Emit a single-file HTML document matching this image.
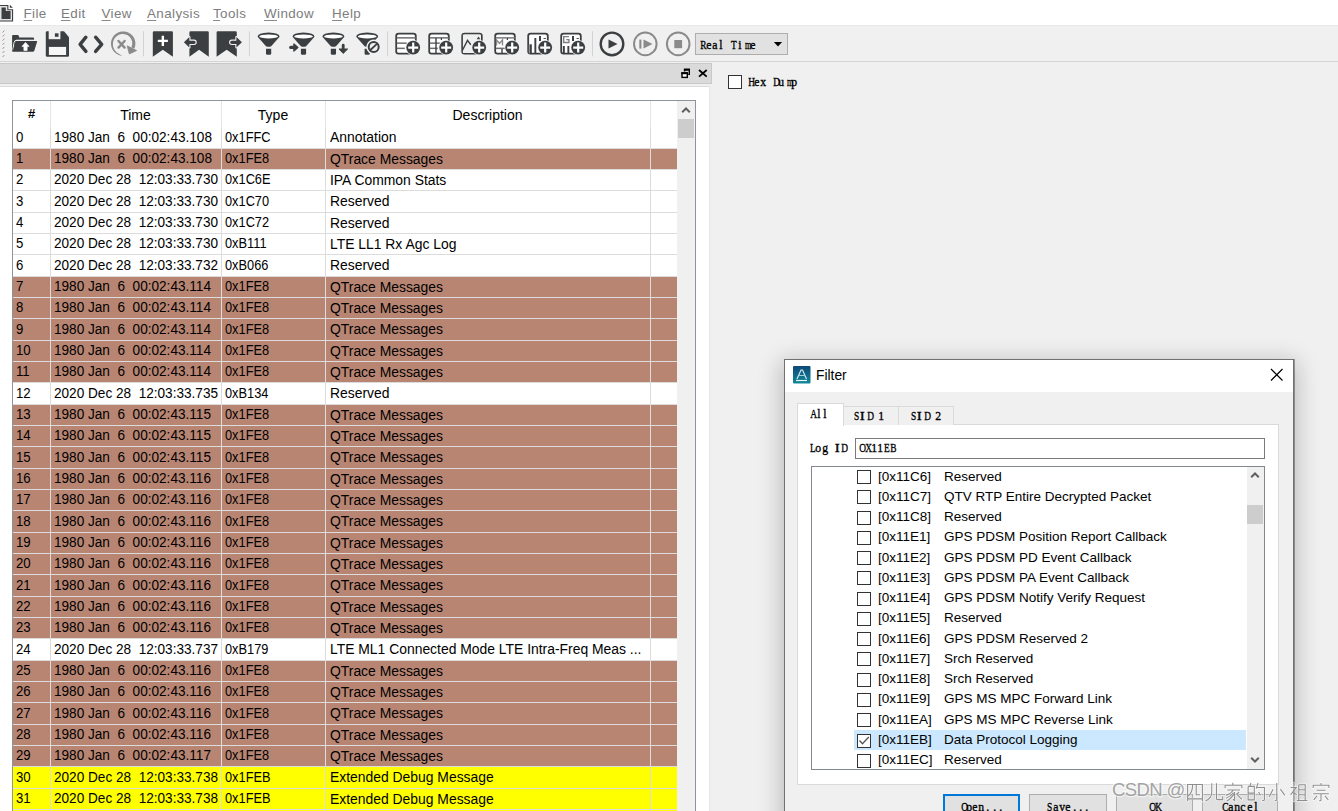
<!DOCTYPE html>
<html><head><meta charset="utf-8"><style>
*{margin:0;padding:0;box-sizing:border-box}
html,body{width:1338px;height:811px;overflow:hidden;background:#f0f0f0;font-family:"Liberation Sans",sans-serif;}
.a{position:absolute}
.t{position:absolute;white-space:pre;font-size:13px;color:#000;line-height:21px}
.m{font-family:"Liberation Mono",monospace;-webkit-text-stroke:0.2px #000}
.ms{font-family:"Liberation Serif",serif;-webkit-text-stroke:0.35px #000}
</style></head><body>

<div class="a" style="left:0;top:0;width:1338px;height:26px;background:#fff"></div>
<div class="a" style="left:0;top:25px;width:1338px;height:1px;background:#e9e9e9"></div>
<svg class="a" style="left:0;top:0" width="15" height="24" viewBox="0 0 15 24"><path d="M-1 5.1H8.4V9.3H13.1V21.6H-1Z" fill="#3c3f41"/><path d="M-1 6.1H7.3V10.3H12V20.5H-1Z" fill="#e2e2e2"/><path d="M1.5 7.6H5.8V11H10.6V18.9H1.5Z" fill="#3c3f41"/><path d="M9.8 4.7L12.9 7.8H9.8Z" fill="#3c3f41"/></svg>
<div class="t" style="left:23.5px;top:5px;font-size:13.4px;letter-spacing:0.4px;color:#7d7d7d;line-height:18px"><u style="text-decoration-color:#8a8a8a;text-underline-offset:2px">F</u>ile</div>
<div class="t" style="left:61px;top:5px;font-size:13.4px;letter-spacing:0.4px;color:#7d7d7d;line-height:18px"><u style="text-decoration-color:#8a8a8a;text-underline-offset:2px">E</u>dit</div>
<div class="t" style="left:101.5px;top:5px;font-size:13.4px;letter-spacing:0.4px;color:#7d7d7d;line-height:18px"><u style="text-decoration-color:#8a8a8a;text-underline-offset:2px">V</u>iew</div>
<div class="t" style="left:147px;top:5px;font-size:13.4px;letter-spacing:0.4px;color:#7d7d7d;line-height:18px"><u style="text-decoration-color:#8a8a8a;text-underline-offset:2px">A</u>nalysis</div>
<div class="t" style="left:213px;top:5px;font-size:13.4px;letter-spacing:0.4px;color:#7d7d7d;line-height:18px"><u style="text-decoration-color:#8a8a8a;text-underline-offset:2px">T</u>ools</div>
<div class="t" style="left:264px;top:5px;font-size:13.4px;letter-spacing:0.4px;color:#7d7d7d;line-height:18px"><u style="text-decoration-color:#8a8a8a;text-underline-offset:2px">W</u>indow</div>
<div class="t" style="left:332px;top:5px;font-size:13.4px;letter-spacing:0.4px;color:#7d7d7d;line-height:18px"><u style="text-decoration-color:#8a8a8a;text-underline-offset:2px">H</u>elp</div>
<div class="a" style="left:0;top:27px;width:1338px;height:34px;background:#f0f0f0"></div>
<div class="a" style="left:0;top:61px;width:1338px;height:1px;background:#d5d5d5"></div>
<svg class="a" style="left:0;top:0" width="800" height="62" viewBox="0 0 800 62"><path d="M2.6 32.5 L4.4 30.5" stroke="#9a9a9a" stroke-width="1"/><path d="M2.6 36.6 L4.4 34.6" stroke="#9a9a9a" stroke-width="1"/><path d="M2.6 40.7 L4.4 38.7" stroke="#9a9a9a" stroke-width="1"/><path d="M2.6 44.8 L4.4 42.8" stroke="#9a9a9a" stroke-width="1"/><path d="M2.6 48.9 L4.4 46.9" stroke="#9a9a9a" stroke-width="1"/><path d="M2.6 53 L4.4 51" stroke="#9a9a9a" stroke-width="1"/><path d="M2.6 57.1 L4.4 55.1" stroke="#9a9a9a" stroke-width="1"/><path d="M12.1 50.5 V36 Q12.1 35.1 13 35.1 H18.3 L19.3 37.4 H33 Q34.1 37.4 34.1 38.5 V40 H16 L13.2 51.7 Q12.1 51.7 12.1 50.5 Z" fill="#3c3f41"/><path d="M36.5 40.2 H16.6 Q14.5 40.2 14 42.5 L12.9 49.8" fill="none" stroke="#f0f0f0" stroke-width="1"/><path d="M16.2 40.9 H36.5 Q37.4 40.9 37.1 41.8 L34.2 50.9 Q33.9 51.7 33 51.7 H13.4 Q12.6 51.7 12.9 50.9 L15.3 42 Q15.5 40.9 16.2 40.9 Z" fill="#3c3f41"/><path d="M25.5 42.4 L29 46.4 H27.1 V50.4 H23.9 V46.4 H22 Z" fill="#fff" stroke="#fff" stroke-width="0.7" stroke-linejoin="round"/><path d="M45.8 32.5 Q45.8 31.35 47 31.35 H64 L69 37.3 V55.5 Q69 56.7 67.8 56.7 H47 Q45.8 56.7 45.8 55.5 Z" fill="#3c3f41"/><rect x="48.7" y="31" width="11.7" height="8.2" fill="#f0f0f0"/><rect x="54.9" y="33.3" width="3.6" height="3.5" fill="#3c3f41"/><rect x="48.9" y="46.9" width="17.2" height="8.1" fill="#f6f6f6"/><path d="M85.9 37.2 L80.1 44.3 L85.9 51.4 M95.6 37.2 L101.7 44.3 L95.6 51.4" fill="none" stroke="#3c3f41" stroke-width="3.4" stroke-linecap="round" stroke-linejoin="round"/><path d="M121.71 55.71 L120.21 55.43 L118.75 54.96 L117.36 54.31 L116.06 53.49 L114.88 52.52 L113.83 51.41 L112.92 50.17 L112.18 48.83 L111.61 47.41 L111.22 45.93 L111.03 44.41 L111.02 42.88 L111.21 41.36 L111.58 39.87 L112.14 38.44 L112.88 37.1 L113.77 35.86 L114.82 34.74 L115.99 33.76 L117.29 32.93 L118.67 32.27 L120.12 31.79 L121.63 31.5 L123.16 31.4 L124.69 31.49 L126.19 31.77 L127.65 32.24 L129.04 32.89 L130.34 33.71 L131.52 34.68 L132.57 35.79 L133.48 37.03 L134.22 38.37 L134.79 39.79 L135.18 41.27 L135.37 42.79 L135.38 44.32 L135.19 45.84 L134.82 47.33 L134.26 48.76 L131.27 47.36 L131.71 46.33 L132.02 45.25 L132.2 44.13 L132.23 43 L132.13 41.86 L131.88 40.75 L131.49 39.66 L130.96 38.63 L130.31 37.67 L129.54 36.8 L128.67 36.02 L127.69 35.36 L126.64 34.82 L125.53 34.41 L124.36 34.14 L123.17 34.02 L121.96 34.06 L120.76 34.24 L119.59 34.57 L118.46 35.05 L117.39 35.67 L116.41 36.42 L115.52 37.29 L114.74 38.27 L114.08 39.35 L113.56 40.5 L113.18 41.73 L112.96 42.99 L112.9 44.28 L112.99 45.58 L113.25 46.87 L113.66 48.13 L114.23 49.34 L114.95 50.47 L115.81 51.53 L116.79 52.48 L117.9 53.33 L119.1 54.05 L120.4 54.68 L121.75 55.41Z" fill="#8a8a8a"/><path d="M127.2 45.8 L136.6 50.6 L129.3 53.9 Z" fill="#8a8a8a" stroke="#8a8a8a" stroke-width="0.8" stroke-linejoin="round"/><path d="M118.5 41 L124.6 47.6 M124.6 41 L118.5 47.6" stroke="#8a8a8a" stroke-width="2.4" stroke-linecap="round"/><rect x="143.0" y="31.3" width="1" height="25" fill="#d2d2d2"/><rect x="248.9" y="31.3" width="1" height="25" fill="#d2d2d2"/><rect x="387.1" y="31.3" width="1" height="25" fill="#d2d2d2"/><rect x="592.0" y="31.3" width="1" height="25" fill="#d2d2d2"/><path d="M152.8 56.7 V32.5 Q152.8 31.35 154 31.35 H171.7 Q172.9 31.35 172.9 32.5 V56.7 L162.85 49.8 Z" fill="#3c3f41"/><path d="M157.8 40.9 H167.9 M162.85 35.7 V45.9" stroke="#fff" stroke-width="2.4"/><path d="M189.4 56.7 V32.5 Q189.4 31.35 190.6 31.35 H207.6 Q208.8 31.35 208.8 32.5 V56.7 L199.1 49.8 Z" fill="#3c3f41"/><path d="M183.9 42.35 L189.4 37.1 V40.7 H194 A1.65 1.65 0 0 1 194 44 H189.4 V47.4 Z" fill="#3c3f41" stroke="#f0f0f0" stroke-width="2.2" stroke-linejoin="round" paint-order="stroke"/><path d="M216.6 56.7 V32.5 Q216.6 31.35 217.8 31.35 H235.6 Q236.8 31.35 236.8 32.5 V56.7 L226.7 49.8 Z" fill="#3c3f41"/><path d="M241.9 42.35 L236.4 37.1 V40.7 H231.8 A1.65 1.65 0 0 0 231.8 44 H236.4 V47.4 Z" fill="#3c3f41" stroke="#f0f0f0" stroke-width="2.2" stroke-linejoin="round" paint-order="stroke"/><path d="M257.6 36.8 Q257.6 33 268.6 32.6 Q279.6 33 279.6 36.8 L271.2 46.2 Q268.6 47.2 266 46.2 Z" fill="#3c3f41"/><ellipse cx="268.6" cy="36.4" rx="9.4" ry="2" fill="#fff"/><path d="M266 48.8 H271.2 V53.4 Q271.2 54.7 269.9 54.7 H267.3 Q266 54.7 266 53.4 Z" fill="#3c3f41"/><path d="M292.5 36.8 Q292.5 33 303.5 32.6 Q314.5 33 314.5 36.8 L306.1 46.2 Q303.5 47.2 300.9 46.2 Z" fill="#3c3f41"/><ellipse cx="303.5" cy="36.4" rx="9.4" ry="2" fill="#fff"/><path d="M300.9 48.8 H306.1 V53.4 Q306.1 54.7 304.8 54.7 H302.2 Q300.9 54.7 300.9 53.4 Z" fill="#3c3f41"/><path d="M290.8 47.4 H294.5" stroke="#3c3f41" stroke-width="3.3" stroke-linecap="round"/><path d="M293.9 43.9 L297.9 47.4 L293.9 51.1 Z" fill="#3c3f41" stroke="#3c3f41" stroke-width="1.3" stroke-linejoin="round"/><path d="M322.4 36.8 Q322.4 33 333.4 32.6 Q344.4 33 344.4 36.8 L336 46.2 Q333.4 47.2 330.8 46.2 Z" fill="#3c3f41"/><ellipse cx="333.4" cy="36.4" rx="9.4" ry="2" fill="#fff"/><path d="M330.8 48.8 H336 V53.4 Q336 54.7 334.7 54.7 H332.1 Q330.8 54.7 330.8 53.4 Z" fill="#3c3f41"/><path d="M343.2 45.2 V49.2" stroke="#3c3f41" stroke-width="2.8" stroke-linecap="round"/><path d="M339 49 H347.6 L343.2 53.4 Z" fill="#3c3f41" stroke="#3c3f41" stroke-width="1" stroke-linejoin="round"/><path d="M356.2 36.8 Q356.2 33 367.2 32.6 Q378.2 33 378.2 36.8 L369.8 46.2 Q367.2 47.2 364.6 46.2 Z" fill="#3c3f41"/><ellipse cx="367.2" cy="36.4" rx="9.4" ry="2" fill="#fff"/><path d="M364.6 48.8 H369.8 V53.4 Q369.8 54.7 368.5 54.7 H365.9 Q364.6 54.7 364.6 53.4 Z" fill="#3c3f41"/><circle cx="373.7" cy="46.9" r="7.4" fill="#f0f0f0"/><circle cx="373.7" cy="46.9" r="5" fill="none" stroke="#3c3f41" stroke-width="2"/><path d="M369.8 50.5 L377.5 43.3" stroke="#3c3f41" stroke-width="1.8"/><rect x="396.2" y="33.7" width="19.6" height="20" rx="2.4" fill="#fff" stroke="#3c3f41" stroke-width="1.8"/><rect x="396.8" y="37.1" width="19" height="1.5" fill="#6e6e6e"/><rect x="396.8" y="42.4" width="10" height="1.5" fill="#6e6e6e"/><rect x="396.8" y="47.6" width="8" height="1.5" fill="#6e6e6e"/><circle cx="413.2" cy="47.6" r="7.7" fill="#f0f0f0"/><circle cx="413.2" cy="47.6" r="6.9" fill="#3c3f41"/><path d="M408.2 47.6H418.2M413.2 42.6V52.6" stroke="#fff" stroke-width="2.2"/><rect x="429.2" y="33.7" width="19.6" height="20" rx="2.4" fill="#fff" stroke="#3c3f41" stroke-width="1.8"/><rect x="429.8" y="37.1" width="19" height="1.5" fill="#6e6e6e"/><rect x="429.8" y="42.4" width="10" height="1.5" fill="#6e6e6e"/><rect x="429.8" y="47.6" width="8" height="1.5" fill="#6e6e6e"/><rect x="435.3" y="38" width="1.4" height="16" fill="#3c3f41"/><rect x="440.8" y="38" width="1.2" height="2" fill="#3c3f41"/><circle cx="446.2" cy="47.6" r="7.7" fill="#f0f0f0"/><circle cx="446.2" cy="47.6" r="6.9" fill="#3c3f41"/><path d="M441.2 47.6H451.2M446.2 42.6V52.6" stroke="#fff" stroke-width="2.2"/><rect x="462.2" y="33.7" width="19.6" height="20" rx="2.4" fill="#fff" stroke="#3c3f41" stroke-width="1.8"/><rect x="462.9" y="34.6" width="18" height="18.4" fill="#f0f0f0"/><path d="M462.6 50 L467.5 40.4 L470.8 44.7" fill="none" stroke="#3c3f41" stroke-width="1.4"/><path d="M476.7 39.3 L478.5 36.6 L480.3 39.3Z" fill="#3c3f41"/><circle cx="479.2" cy="47.6" r="7.7" fill="#f0f0f0"/><circle cx="479.2" cy="47.6" r="6.9" fill="#3c3f41"/><path d="M474.2 47.6H484.2M479.2 42.6V52.6" stroke="#fff" stroke-width="2.2"/><rect x="495.2" y="33.7" width="19.6" height="20" rx="2.4" fill="#fff" stroke="#3c3f41" stroke-width="1.8"/><rect x="495.8" y="37.1" width="19" height="1.5" fill="#7a7a7a"/><path d="M496.5 45.5 V40 L499.5 43.5 L502.5 40 V45.5" fill="none" stroke="#8a8a8a" stroke-width="1.4"/><rect x="495.8" y="47.6" width="10" height="1.5" fill="#6e6e6e"/><rect x="501.3" y="49" width="1.4" height="5" fill="#3c3f41"/><rect x="506.8" y="38" width="1.2" height="2" fill="#3c3f41"/><circle cx="512.2" cy="47.6" r="7.7" fill="#f0f0f0"/><circle cx="512.2" cy="47.6" r="6.9" fill="#3c3f41"/><path d="M507.2 47.6H517.2M512.2 42.6V52.6" stroke="#fff" stroke-width="2.2"/><rect x="528.2" y="33.7" width="19.6" height="20" rx="2.4" fill="#fff" stroke="#3c3f41" stroke-width="1.8"/><rect x="528.8" y="44.3" width="1.2" height="9" fill="#9a9a9a"/><rect x="529.9" y="44.3" width="1.9" height="9" fill="#3c3f41"/><rect x="534.4" y="38" width="1.9" height="15.3" fill="#3c3f41"/><rect x="539" y="36" width="2" height="5" fill="#3c3f41"/><rect x="543.5" y="38.1" width="2.4" height="0.9" fill="#3c3f41"/><circle cx="545.2" cy="47.6" r="7.7" fill="#f0f0f0"/><circle cx="545.2" cy="47.6" r="6.9" fill="#3c3f41"/><path d="M540.2 47.6H550.2M545.2 42.6V52.6" stroke="#fff" stroke-width="2.2"/><rect x="561.2" y="33.7" width="19.6" height="20" rx="2.4" fill="#fff" stroke="#3c3f41" stroke-width="1.8"/><path d="M568.9 36.6 H563.7 V42.5 H568.9 V39.6 H566.3" fill="none" stroke="#7e7e7e" stroke-width="1.4"/><rect x="562.9" y="46" width="1.9" height="7.3" fill="#3c3f41"/><rect x="567.4" y="46" width="1.9" height="7.3" fill="#3c3f41"/><rect x="572" y="36" width="2" height="5" fill="#3c3f41"/><rect x="576.5" y="38.1" width="2.4" height="0.9" fill="#3c3f41"/><circle cx="578.2" cy="47.6" r="7.7" fill="#f0f0f0"/><circle cx="578.2" cy="47.6" r="6.9" fill="#3c3f41"/><path d="M573.2 47.6H583.2M578.2 42.6V52.6" stroke="#fff" stroke-width="2.2"/><circle cx="612" cy="43.9" r="11.3" fill="none" stroke="#3c3f41" stroke-width="2.4"/><path d="M608.5 39.6 L617.5 43.9 L608.5 48.6 Z" fill="#3c3f41"/><circle cx="645.3" cy="43.9" r="11.3" fill="none" stroke="#8a8a8a" stroke-width="2"/><rect x="639.3" y="39.6" width="2.1" height="9" fill="#8a8a8a"/><path d="M643.5 39.6 L652.5 44.1 L643.5 48.6 Z" fill="#8a8a8a"/><circle cx="678.2" cy="43.9" r="11.3" fill="none" stroke="#8a8a8a" stroke-width="2"/><rect x="674.3" y="40" width="7.8" height="8.2" fill="#8a8a8a"/><rect x="695.5" y="33.5" width="92" height="21" fill="#e1e1e1" stroke="#adadad" stroke-width="1"/><path d="M773.9 42 H782.1 L778 46.6 Z" fill="#000"/></svg><div class="t ms" style="left:699px;top:36.5px;font-size:13px;line-height:16px;"><span style="display:inline-block;width:6.3px;text-align:center"><span style="display:inline-block;transform:scaleX(0.72)">R</span></span><span style="display:inline-block;width:6.3px;text-align:center"><span style="display:inline-block;transform:scaleX(0.9)">e</span></span><span style="display:inline-block;width:6.3px;text-align:center"><span style="display:inline-block;transform:scaleX(0.9)">a</span></span><span style="display:inline-block;width:6.3px;text-align:center"><span style="display:inline-block;transform:scaleX(0.9)">l</span></span><span style="display:inline-block;width:6.3px">&nbsp;</span><span style="display:inline-block;width:6.3px;text-align:center"><span style="display:inline-block;transform:scaleX(0.72)">T</span></span><span style="display:inline-block;width:6.3px;text-align:center"><span style="display:inline-block;transform:scaleX(0.9)">i</span></span><span style="display:inline-block;width:6.3px;text-align:center"><span style="display:inline-block;transform:scaleX(0.62)">m</span></span><span style="display:inline-block;width:6.3px;text-align:center"><span style="display:inline-block;transform:scaleX(0.9)">e</span></span></div>
<div class="a" style="left:0;top:63px;width:712px;height:21px;background:#dadada;border:1px solid #c9c9c9;border-left:none"></div>
<svg class="a" style="left:680px;top:67px" width="12" height="13" viewBox="0 0 12 13"><path d="M4.6 4.6 V2.5 H9.3 V7.4 H8.2" fill="none" stroke="#000" stroke-width="1.4"/><rect x="3.9" y="1.7" width="6.1" height="2" fill="#000"/><rect x="2" y="6" width="5.3" height="4.4" fill="#fff" stroke="#000" stroke-width="1.4"/><rect x="1.3" y="5.2" width="6.7" height="2" fill="#000"/></svg>
<svg class="a" style="left:697px;top:68px" width="12" height="11" viewBox="0 0 12 11"><path d="M2 2 L9.7 8.6 M9.7 2 L2 8.6" stroke="#000" stroke-width="1.8"/></svg>
<div class="a" style="left:0;top:86px;width:710px;height:725px;background:#fff;border-right:1px solid #e6e6e6;border-top:1px solid #dcdcdc"></div>
<div class="a" style="left:12px;top:100px;width:684px;height:711px;border:1px solid #8e949c;border-bottom:none;background:#fff"></div>
<div class="t" style="left:28px;top:105px;font-size:13px;font-weight:bold;line-height:18px">#</div>
<div class="t" style="left:50px;top:105px;width:171px;text-align:center;font-size:14px;line-height:21px">Time</div>
<div class="t" style="left:221px;top:105px;width:104px;text-align:center;font-size:14px;line-height:21px">Type</div>
<div class="t" style="left:325px;top:105px;width:325px;text-align:center;font-size:14px;line-height:21px">Description</div>
<div class="a" style="left:50px;top:101px;width:1px;height:26px;background:#e5e5e5"></div>
<div class="a" style="left:221px;top:101px;width:1px;height:26px;background:#e5e5e5"></div>
<div class="a" style="left:325px;top:101px;width:1px;height:26px;background:#e5e5e5"></div>
<div class="a" style="left:650px;top:101px;width:1px;height:26px;background:#e5e5e5"></div>
<div class="a" style="left:13px;top:127px;width:664px;height:21px;background:#fff"></div>
<div class="a" style="left:13px;top:127px;width:37px;height:21px;background:#ffffff"></div>
<div class="a" style="left:51px;top:127px;width:170px;height:21px;background:#ffffff"></div>
<div class="a" style="left:222px;top:127px;width:103px;height:21px;background:#ffffff"></div>
<div class="a" style="left:326px;top:127px;width:324px;height:21px;background:#ffffff"></div>
<div class="a" style="left:651px;top:127px;width:26px;height:21px;background:#ffffff"></div>
<div class="a" style="left:13px;top:148px;width:664px;height:1px;background:#dcdcdc"></div>
<div class="t" style="left:16px;top:127px;line-height:21px;height:21px;font-size:13.2px;transform:scaleY(1.1);transform-origin:0 15px">0</div>
<div class="t" style="left:54px;top:127px;line-height:21px;height:21px;font-size:13.6px;transform:scaleY(1.1);transform-origin:0 15px">1980 Jan  6  00:02:43.108</div>
<div class="t" style="left:225px;top:127px;line-height:21px;height:21px;font-size:12.8px;transform:scaleY(1.1);transform-origin:0 15px">0x1FFC</div>
<div class="t" style="left:330px;top:127px;line-height:21px;height:21px;font-size:13.9px;transform:scaleY(1.1);transform-origin:0 15px">Annotation</div>
<div class="a" style="left:13px;top:149px;width:664px;height:20px;background:#fff"></div>
<div class="a" style="left:13px;top:149px;width:37px;height:20px;background:#b88573"></div>
<div class="a" style="left:51px;top:149px;width:170px;height:20px;background:#b88573"></div>
<div class="a" style="left:222px;top:149px;width:103px;height:20px;background:#b88573"></div>
<div class="a" style="left:326px;top:149px;width:324px;height:20px;background:#b88573"></div>
<div class="a" style="left:651px;top:149px;width:26px;height:20px;background:#b88573"></div>
<div class="a" style="left:13px;top:169px;width:664px;height:1px;background:#dcdcdc"></div>
<div class="t" style="left:16px;top:149px;line-height:20px;height:20px;font-size:13.2px;transform:scaleY(1.1);transform-origin:0 15px">1</div>
<div class="t" style="left:54px;top:149px;line-height:20px;height:20px;font-size:13.6px;transform:scaleY(1.1);transform-origin:0 15px">1980 Jan  6  00:02:43.108</div>
<div class="t" style="left:225px;top:149px;line-height:20px;height:20px;font-size:12.8px;transform:scaleY(1.1);transform-origin:0 15px">0x1FE8</div>
<div class="t" style="left:330px;top:149px;line-height:20px;height:20px;font-size:13.9px;transform:scaleY(1.1);transform-origin:0 15px">QTrace Messages</div>
<div class="a" style="left:13px;top:170px;width:664px;height:20px;background:#fff"></div>
<div class="a" style="left:13px;top:170px;width:37px;height:20px;background:#ffffff"></div>
<div class="a" style="left:51px;top:170px;width:170px;height:20px;background:#ffffff"></div>
<div class="a" style="left:222px;top:170px;width:103px;height:20px;background:#ffffff"></div>
<div class="a" style="left:326px;top:170px;width:324px;height:20px;background:#ffffff"></div>
<div class="a" style="left:651px;top:170px;width:26px;height:20px;background:#ffffff"></div>
<div class="a" style="left:13px;top:190px;width:664px;height:1px;background:#dcdcdc"></div>
<div class="t" style="left:16px;top:170px;line-height:20px;height:20px;font-size:13.2px;transform:scaleY(1.1);transform-origin:0 15px">2</div>
<div class="t" style="left:54px;top:170px;line-height:20px;height:20px;font-size:13.6px;transform:scaleY(1.1);transform-origin:0 15px">2020 Dec 28  12:03:33.730</div>
<div class="t" style="left:225px;top:170px;line-height:20px;height:20px;font-size:12.8px;transform:scaleY(1.1);transform-origin:0 15px">0x1C6E</div>
<div class="t" style="left:330px;top:170px;line-height:20px;height:20px;font-size:13.9px;transform:scaleY(1.1);transform-origin:0 15px">IPA Common Stats</div>
<div class="a" style="left:13px;top:191px;width:664px;height:21px;background:#fff"></div>
<div class="a" style="left:13px;top:191px;width:37px;height:21px;background:#ffffff"></div>
<div class="a" style="left:51px;top:191px;width:170px;height:21px;background:#ffffff"></div>
<div class="a" style="left:222px;top:191px;width:103px;height:21px;background:#ffffff"></div>
<div class="a" style="left:326px;top:191px;width:324px;height:21px;background:#ffffff"></div>
<div class="a" style="left:651px;top:191px;width:26px;height:21px;background:#ffffff"></div>
<div class="a" style="left:13px;top:212px;width:664px;height:1px;background:#dcdcdc"></div>
<div class="t" style="left:16px;top:191px;line-height:21px;height:21px;font-size:13.2px;transform:scaleY(1.1);transform-origin:0 15px">3</div>
<div class="t" style="left:54px;top:191px;line-height:21px;height:21px;font-size:13.6px;transform:scaleY(1.1);transform-origin:0 15px">2020 Dec 28  12:03:33.730</div>
<div class="t" style="left:225px;top:191px;line-height:21px;height:21px;font-size:12.8px;transform:scaleY(1.1);transform-origin:0 15px">0x1C70</div>
<div class="t" style="left:330px;top:191px;line-height:21px;height:21px;font-size:13.9px;transform:scaleY(1.1);transform-origin:0 15px">Reserved</div>
<div class="a" style="left:13px;top:213px;width:664px;height:20px;background:#fff"></div>
<div class="a" style="left:13px;top:213px;width:37px;height:20px;background:#ffffff"></div>
<div class="a" style="left:51px;top:213px;width:170px;height:20px;background:#ffffff"></div>
<div class="a" style="left:222px;top:213px;width:103px;height:20px;background:#ffffff"></div>
<div class="a" style="left:326px;top:213px;width:324px;height:20px;background:#ffffff"></div>
<div class="a" style="left:651px;top:213px;width:26px;height:20px;background:#ffffff"></div>
<div class="a" style="left:13px;top:233px;width:664px;height:1px;background:#dcdcdc"></div>
<div class="t" style="left:16px;top:213px;line-height:20px;height:20px;font-size:13.2px;transform:scaleY(1.1);transform-origin:0 15px">4</div>
<div class="t" style="left:54px;top:213px;line-height:20px;height:20px;font-size:13.6px;transform:scaleY(1.1);transform-origin:0 15px">2020 Dec 28  12:03:33.730</div>
<div class="t" style="left:225px;top:213px;line-height:20px;height:20px;font-size:12.8px;transform:scaleY(1.1);transform-origin:0 15px">0x1C72</div>
<div class="t" style="left:330px;top:213px;line-height:20px;height:20px;font-size:13.9px;transform:scaleY(1.1);transform-origin:0 15px">Reserved</div>
<div class="a" style="left:13px;top:234px;width:664px;height:20px;background:#fff"></div>
<div class="a" style="left:13px;top:234px;width:37px;height:20px;background:#ffffff"></div>
<div class="a" style="left:51px;top:234px;width:170px;height:20px;background:#ffffff"></div>
<div class="a" style="left:222px;top:234px;width:103px;height:20px;background:#ffffff"></div>
<div class="a" style="left:326px;top:234px;width:324px;height:20px;background:#ffffff"></div>
<div class="a" style="left:651px;top:234px;width:26px;height:20px;background:#ffffff"></div>
<div class="a" style="left:13px;top:254px;width:664px;height:1px;background:#dcdcdc"></div>
<div class="t" style="left:16px;top:234px;line-height:20px;height:20px;font-size:13.2px;transform:scaleY(1.1);transform-origin:0 15px">5</div>
<div class="t" style="left:54px;top:234px;line-height:20px;height:20px;font-size:13.6px;transform:scaleY(1.1);transform-origin:0 15px">2020 Dec 28  12:03:33.730</div>
<div class="t" style="left:225px;top:234px;line-height:20px;height:20px;font-size:12.8px;transform:scaleY(1.1);transform-origin:0 15px">0xB111</div>
<div class="t" style="left:330px;top:234px;line-height:20px;height:20px;font-size:13.9px;transform:scaleY(1.1);transform-origin:0 15px">LTE LL1 Rx Agc Log</div>
<div class="a" style="left:13px;top:255px;width:664px;height:21px;background:#fff"></div>
<div class="a" style="left:13px;top:255px;width:37px;height:21px;background:#ffffff"></div>
<div class="a" style="left:51px;top:255px;width:170px;height:21px;background:#ffffff"></div>
<div class="a" style="left:222px;top:255px;width:103px;height:21px;background:#ffffff"></div>
<div class="a" style="left:326px;top:255px;width:324px;height:21px;background:#ffffff"></div>
<div class="a" style="left:651px;top:255px;width:26px;height:21px;background:#ffffff"></div>
<div class="a" style="left:13px;top:276px;width:664px;height:1px;background:#dcdcdc"></div>
<div class="t" style="left:16px;top:255px;line-height:21px;height:21px;font-size:13.2px;transform:scaleY(1.1);transform-origin:0 15px">6</div>
<div class="t" style="left:54px;top:255px;line-height:21px;height:21px;font-size:13.6px;transform:scaleY(1.1);transform-origin:0 15px">2020 Dec 28  12:03:33.732</div>
<div class="t" style="left:225px;top:255px;line-height:21px;height:21px;font-size:12.8px;transform:scaleY(1.1);transform-origin:0 15px">0xB066</div>
<div class="t" style="left:330px;top:255px;line-height:21px;height:21px;font-size:13.9px;transform:scaleY(1.1);transform-origin:0 15px">Reserved</div>
<div class="a" style="left:13px;top:277px;width:664px;height:20px;background:#fff"></div>
<div class="a" style="left:13px;top:277px;width:37px;height:20px;background:#b88573"></div>
<div class="a" style="left:51px;top:277px;width:170px;height:20px;background:#b88573"></div>
<div class="a" style="left:222px;top:277px;width:103px;height:20px;background:#b88573"></div>
<div class="a" style="left:326px;top:277px;width:324px;height:20px;background:#b88573"></div>
<div class="a" style="left:651px;top:277px;width:26px;height:20px;background:#b88573"></div>
<div class="a" style="left:13px;top:297px;width:664px;height:1px;background:#dcdcdc"></div>
<div class="t" style="left:16px;top:277px;line-height:20px;height:20px;font-size:13.2px;transform:scaleY(1.1);transform-origin:0 15px">7</div>
<div class="t" style="left:54px;top:277px;line-height:20px;height:20px;font-size:13.6px;transform:scaleY(1.1);transform-origin:0 15px">1980 Jan  6  00:02:43.114</div>
<div class="t" style="left:225px;top:277px;line-height:20px;height:20px;font-size:12.8px;transform:scaleY(1.1);transform-origin:0 15px">0x1FE8</div>
<div class="t" style="left:330px;top:277px;line-height:20px;height:20px;font-size:13.9px;transform:scaleY(1.1);transform-origin:0 15px">QTrace Messages</div>
<div class="a" style="left:13px;top:298px;width:664px;height:20px;background:#fff"></div>
<div class="a" style="left:13px;top:298px;width:37px;height:20px;background:#b88573"></div>
<div class="a" style="left:51px;top:298px;width:170px;height:20px;background:#b88573"></div>
<div class="a" style="left:222px;top:298px;width:103px;height:20px;background:#b88573"></div>
<div class="a" style="left:326px;top:298px;width:324px;height:20px;background:#b88573"></div>
<div class="a" style="left:651px;top:298px;width:26px;height:20px;background:#b88573"></div>
<div class="a" style="left:13px;top:318px;width:664px;height:1px;background:#dcdcdc"></div>
<div class="t" style="left:16px;top:298px;line-height:20px;height:20px;font-size:13.2px;transform:scaleY(1.1);transform-origin:0 15px">8</div>
<div class="t" style="left:54px;top:298px;line-height:20px;height:20px;font-size:13.6px;transform:scaleY(1.1);transform-origin:0 15px">1980 Jan  6  00:02:43.114</div>
<div class="t" style="left:225px;top:298px;line-height:20px;height:20px;font-size:12.8px;transform:scaleY(1.1);transform-origin:0 15px">0x1FE8</div>
<div class="t" style="left:330px;top:298px;line-height:20px;height:20px;font-size:13.9px;transform:scaleY(1.1);transform-origin:0 15px">QTrace Messages</div>
<div class="a" style="left:13px;top:319px;width:664px;height:21px;background:#fff"></div>
<div class="a" style="left:13px;top:319px;width:37px;height:21px;background:#b88573"></div>
<div class="a" style="left:51px;top:319px;width:170px;height:21px;background:#b88573"></div>
<div class="a" style="left:222px;top:319px;width:103px;height:21px;background:#b88573"></div>
<div class="a" style="left:326px;top:319px;width:324px;height:21px;background:#b88573"></div>
<div class="a" style="left:651px;top:319px;width:26px;height:21px;background:#b88573"></div>
<div class="a" style="left:13px;top:340px;width:664px;height:1px;background:#dcdcdc"></div>
<div class="t" style="left:16px;top:319px;line-height:21px;height:21px;font-size:13.2px;transform:scaleY(1.1);transform-origin:0 15px">9</div>
<div class="t" style="left:54px;top:319px;line-height:21px;height:21px;font-size:13.6px;transform:scaleY(1.1);transform-origin:0 15px">1980 Jan  6  00:02:43.114</div>
<div class="t" style="left:225px;top:319px;line-height:21px;height:21px;font-size:12.8px;transform:scaleY(1.1);transform-origin:0 15px">0x1FE8</div>
<div class="t" style="left:330px;top:319px;line-height:21px;height:21px;font-size:13.9px;transform:scaleY(1.1);transform-origin:0 15px">QTrace Messages</div>
<div class="a" style="left:13px;top:341px;width:664px;height:20px;background:#fff"></div>
<div class="a" style="left:13px;top:341px;width:37px;height:20px;background:#b88573"></div>
<div class="a" style="left:51px;top:341px;width:170px;height:20px;background:#b88573"></div>
<div class="a" style="left:222px;top:341px;width:103px;height:20px;background:#b88573"></div>
<div class="a" style="left:326px;top:341px;width:324px;height:20px;background:#b88573"></div>
<div class="a" style="left:651px;top:341px;width:26px;height:20px;background:#b88573"></div>
<div class="a" style="left:13px;top:361px;width:664px;height:1px;background:#dcdcdc"></div>
<div class="t" style="left:16px;top:341px;line-height:20px;height:20px;font-size:13.2px;transform:scaleY(1.1);transform-origin:0 15px">10</div>
<div class="t" style="left:54px;top:341px;line-height:20px;height:20px;font-size:13.6px;transform:scaleY(1.1);transform-origin:0 15px">1980 Jan  6  00:02:43.114</div>
<div class="t" style="left:225px;top:341px;line-height:20px;height:20px;font-size:12.8px;transform:scaleY(1.1);transform-origin:0 15px">0x1FE8</div>
<div class="t" style="left:330px;top:341px;line-height:20px;height:20px;font-size:13.9px;transform:scaleY(1.1);transform-origin:0 15px">QTrace Messages</div>
<div class="a" style="left:13px;top:362px;width:664px;height:20px;background:#fff"></div>
<div class="a" style="left:13px;top:362px;width:37px;height:20px;background:#b88573"></div>
<div class="a" style="left:51px;top:362px;width:170px;height:20px;background:#b88573"></div>
<div class="a" style="left:222px;top:362px;width:103px;height:20px;background:#b88573"></div>
<div class="a" style="left:326px;top:362px;width:324px;height:20px;background:#b88573"></div>
<div class="a" style="left:651px;top:362px;width:26px;height:20px;background:#b88573"></div>
<div class="a" style="left:13px;top:382px;width:664px;height:1px;background:#dcdcdc"></div>
<div class="t" style="left:16px;top:362px;line-height:20px;height:20px;font-size:13.2px;transform:scaleY(1.1);transform-origin:0 15px">11</div>
<div class="t" style="left:54px;top:362px;line-height:20px;height:20px;font-size:13.6px;transform:scaleY(1.1);transform-origin:0 15px">1980 Jan  6  00:02:43.114</div>
<div class="t" style="left:225px;top:362px;line-height:20px;height:20px;font-size:12.8px;transform:scaleY(1.1);transform-origin:0 15px">0x1FE8</div>
<div class="t" style="left:330px;top:362px;line-height:20px;height:20px;font-size:13.9px;transform:scaleY(1.1);transform-origin:0 15px">QTrace Messages</div>
<div class="a" style="left:13px;top:383px;width:664px;height:21px;background:#fff"></div>
<div class="a" style="left:13px;top:383px;width:37px;height:21px;background:#ffffff"></div>
<div class="a" style="left:51px;top:383px;width:170px;height:21px;background:#ffffff"></div>
<div class="a" style="left:222px;top:383px;width:103px;height:21px;background:#ffffff"></div>
<div class="a" style="left:326px;top:383px;width:324px;height:21px;background:#ffffff"></div>
<div class="a" style="left:651px;top:383px;width:26px;height:21px;background:#ffffff"></div>
<div class="a" style="left:13px;top:404px;width:664px;height:1px;background:#dcdcdc"></div>
<div class="t" style="left:16px;top:383px;line-height:21px;height:21px;font-size:13.2px;transform:scaleY(1.1);transform-origin:0 15px">12</div>
<div class="t" style="left:54px;top:383px;line-height:21px;height:21px;font-size:13.6px;transform:scaleY(1.1);transform-origin:0 15px">2020 Dec 28  12:03:33.735</div>
<div class="t" style="left:225px;top:383px;line-height:21px;height:21px;font-size:12.8px;transform:scaleY(1.1);transform-origin:0 15px">0xB134</div>
<div class="t" style="left:330px;top:383px;line-height:21px;height:21px;font-size:13.9px;transform:scaleY(1.1);transform-origin:0 15px">Reserved</div>
<div class="a" style="left:13px;top:405px;width:664px;height:20px;background:#fff"></div>
<div class="a" style="left:13px;top:405px;width:37px;height:20px;background:#b88573"></div>
<div class="a" style="left:51px;top:405px;width:170px;height:20px;background:#b88573"></div>
<div class="a" style="left:222px;top:405px;width:103px;height:20px;background:#b88573"></div>
<div class="a" style="left:326px;top:405px;width:324px;height:20px;background:#b88573"></div>
<div class="a" style="left:651px;top:405px;width:26px;height:20px;background:#b88573"></div>
<div class="a" style="left:13px;top:425px;width:664px;height:1px;background:#dcdcdc"></div>
<div class="t" style="left:16px;top:405px;line-height:20px;height:20px;font-size:13.2px;transform:scaleY(1.1);transform-origin:0 15px">13</div>
<div class="t" style="left:54px;top:405px;line-height:20px;height:20px;font-size:13.6px;transform:scaleY(1.1);transform-origin:0 15px">1980 Jan  6  00:02:43.115</div>
<div class="t" style="left:225px;top:405px;line-height:20px;height:20px;font-size:12.8px;transform:scaleY(1.1);transform-origin:0 15px">0x1FE8</div>
<div class="t" style="left:330px;top:405px;line-height:20px;height:20px;font-size:13.9px;transform:scaleY(1.1);transform-origin:0 15px">QTrace Messages</div>
<div class="a" style="left:13px;top:426px;width:664px;height:20px;background:#fff"></div>
<div class="a" style="left:13px;top:426px;width:37px;height:20px;background:#b88573"></div>
<div class="a" style="left:51px;top:426px;width:170px;height:20px;background:#b88573"></div>
<div class="a" style="left:222px;top:426px;width:103px;height:20px;background:#b88573"></div>
<div class="a" style="left:326px;top:426px;width:324px;height:20px;background:#b88573"></div>
<div class="a" style="left:651px;top:426px;width:26px;height:20px;background:#b88573"></div>
<div class="a" style="left:13px;top:446px;width:664px;height:1px;background:#dcdcdc"></div>
<div class="t" style="left:16px;top:426px;line-height:20px;height:20px;font-size:13.2px;transform:scaleY(1.1);transform-origin:0 15px">14</div>
<div class="t" style="left:54px;top:426px;line-height:20px;height:20px;font-size:13.6px;transform:scaleY(1.1);transform-origin:0 15px">1980 Jan  6  00:02:43.115</div>
<div class="t" style="left:225px;top:426px;line-height:20px;height:20px;font-size:12.8px;transform:scaleY(1.1);transform-origin:0 15px">0x1FE8</div>
<div class="t" style="left:330px;top:426px;line-height:20px;height:20px;font-size:13.9px;transform:scaleY(1.1);transform-origin:0 15px">QTrace Messages</div>
<div class="a" style="left:13px;top:447px;width:664px;height:21px;background:#fff"></div>
<div class="a" style="left:13px;top:447px;width:37px;height:21px;background:#b88573"></div>
<div class="a" style="left:51px;top:447px;width:170px;height:21px;background:#b88573"></div>
<div class="a" style="left:222px;top:447px;width:103px;height:21px;background:#b88573"></div>
<div class="a" style="left:326px;top:447px;width:324px;height:21px;background:#b88573"></div>
<div class="a" style="left:651px;top:447px;width:26px;height:21px;background:#b88573"></div>
<div class="a" style="left:13px;top:468px;width:664px;height:1px;background:#dcdcdc"></div>
<div class="t" style="left:16px;top:447px;line-height:21px;height:21px;font-size:13.2px;transform:scaleY(1.1);transform-origin:0 15px">15</div>
<div class="t" style="left:54px;top:447px;line-height:21px;height:21px;font-size:13.6px;transform:scaleY(1.1);transform-origin:0 15px">1980 Jan  6  00:02:43.115</div>
<div class="t" style="left:225px;top:447px;line-height:21px;height:21px;font-size:12.8px;transform:scaleY(1.1);transform-origin:0 15px">0x1FE8</div>
<div class="t" style="left:330px;top:447px;line-height:21px;height:21px;font-size:13.9px;transform:scaleY(1.1);transform-origin:0 15px">QTrace Messages</div>
<div class="a" style="left:13px;top:469px;width:664px;height:20px;background:#fff"></div>
<div class="a" style="left:13px;top:469px;width:37px;height:20px;background:#b88573"></div>
<div class="a" style="left:51px;top:469px;width:170px;height:20px;background:#b88573"></div>
<div class="a" style="left:222px;top:469px;width:103px;height:20px;background:#b88573"></div>
<div class="a" style="left:326px;top:469px;width:324px;height:20px;background:#b88573"></div>
<div class="a" style="left:651px;top:469px;width:26px;height:20px;background:#b88573"></div>
<div class="a" style="left:13px;top:489px;width:664px;height:1px;background:#dcdcdc"></div>
<div class="t" style="left:16px;top:469px;line-height:20px;height:20px;font-size:13.2px;transform:scaleY(1.1);transform-origin:0 15px">16</div>
<div class="t" style="left:54px;top:469px;line-height:20px;height:20px;font-size:13.6px;transform:scaleY(1.1);transform-origin:0 15px">1980 Jan  6  00:02:43.116</div>
<div class="t" style="left:225px;top:469px;line-height:20px;height:20px;font-size:12.8px;transform:scaleY(1.1);transform-origin:0 15px">0x1FE8</div>
<div class="t" style="left:330px;top:469px;line-height:20px;height:20px;font-size:13.9px;transform:scaleY(1.1);transform-origin:0 15px">QTrace Messages</div>
<div class="a" style="left:13px;top:490px;width:664px;height:20px;background:#fff"></div>
<div class="a" style="left:13px;top:490px;width:37px;height:20px;background:#b88573"></div>
<div class="a" style="left:51px;top:490px;width:170px;height:20px;background:#b88573"></div>
<div class="a" style="left:222px;top:490px;width:103px;height:20px;background:#b88573"></div>
<div class="a" style="left:326px;top:490px;width:324px;height:20px;background:#b88573"></div>
<div class="a" style="left:651px;top:490px;width:26px;height:20px;background:#b88573"></div>
<div class="a" style="left:13px;top:510px;width:664px;height:1px;background:#dcdcdc"></div>
<div class="t" style="left:16px;top:490px;line-height:20px;height:20px;font-size:13.2px;transform:scaleY(1.1);transform-origin:0 15px">17</div>
<div class="t" style="left:54px;top:490px;line-height:20px;height:20px;font-size:13.6px;transform:scaleY(1.1);transform-origin:0 15px">1980 Jan  6  00:02:43.116</div>
<div class="t" style="left:225px;top:490px;line-height:20px;height:20px;font-size:12.8px;transform:scaleY(1.1);transform-origin:0 15px">0x1FE8</div>
<div class="t" style="left:330px;top:490px;line-height:20px;height:20px;font-size:13.9px;transform:scaleY(1.1);transform-origin:0 15px">QTrace Messages</div>
<div class="a" style="left:13px;top:511px;width:664px;height:21px;background:#fff"></div>
<div class="a" style="left:13px;top:511px;width:37px;height:21px;background:#b88573"></div>
<div class="a" style="left:51px;top:511px;width:170px;height:21px;background:#b88573"></div>
<div class="a" style="left:222px;top:511px;width:103px;height:21px;background:#b88573"></div>
<div class="a" style="left:326px;top:511px;width:324px;height:21px;background:#b88573"></div>
<div class="a" style="left:651px;top:511px;width:26px;height:21px;background:#b88573"></div>
<div class="a" style="left:13px;top:532px;width:664px;height:1px;background:#dcdcdc"></div>
<div class="t" style="left:16px;top:511px;line-height:21px;height:21px;font-size:13.2px;transform:scaleY(1.1);transform-origin:0 15px">18</div>
<div class="t" style="left:54px;top:511px;line-height:21px;height:21px;font-size:13.6px;transform:scaleY(1.1);transform-origin:0 15px">1980 Jan  6  00:02:43.116</div>
<div class="t" style="left:225px;top:511px;line-height:21px;height:21px;font-size:12.8px;transform:scaleY(1.1);transform-origin:0 15px">0x1FE8</div>
<div class="t" style="left:330px;top:511px;line-height:21px;height:21px;font-size:13.9px;transform:scaleY(1.1);transform-origin:0 15px">QTrace Messages</div>
<div class="a" style="left:13px;top:533px;width:664px;height:20px;background:#fff"></div>
<div class="a" style="left:13px;top:533px;width:37px;height:20px;background:#b88573"></div>
<div class="a" style="left:51px;top:533px;width:170px;height:20px;background:#b88573"></div>
<div class="a" style="left:222px;top:533px;width:103px;height:20px;background:#b88573"></div>
<div class="a" style="left:326px;top:533px;width:324px;height:20px;background:#b88573"></div>
<div class="a" style="left:651px;top:533px;width:26px;height:20px;background:#b88573"></div>
<div class="a" style="left:13px;top:553px;width:664px;height:1px;background:#dcdcdc"></div>
<div class="t" style="left:16px;top:533px;line-height:20px;height:20px;font-size:13.2px;transform:scaleY(1.1);transform-origin:0 15px">19</div>
<div class="t" style="left:54px;top:533px;line-height:20px;height:20px;font-size:13.6px;transform:scaleY(1.1);transform-origin:0 15px">1980 Jan  6  00:02:43.116</div>
<div class="t" style="left:225px;top:533px;line-height:20px;height:20px;font-size:12.8px;transform:scaleY(1.1);transform-origin:0 15px">0x1FE8</div>
<div class="t" style="left:330px;top:533px;line-height:20px;height:20px;font-size:13.9px;transform:scaleY(1.1);transform-origin:0 15px">QTrace Messages</div>
<div class="a" style="left:13px;top:554px;width:664px;height:20px;background:#fff"></div>
<div class="a" style="left:13px;top:554px;width:37px;height:20px;background:#b88573"></div>
<div class="a" style="left:51px;top:554px;width:170px;height:20px;background:#b88573"></div>
<div class="a" style="left:222px;top:554px;width:103px;height:20px;background:#b88573"></div>
<div class="a" style="left:326px;top:554px;width:324px;height:20px;background:#b88573"></div>
<div class="a" style="left:651px;top:554px;width:26px;height:20px;background:#b88573"></div>
<div class="a" style="left:13px;top:574px;width:664px;height:1px;background:#dcdcdc"></div>
<div class="t" style="left:16px;top:554px;line-height:20px;height:20px;font-size:13.2px;transform:scaleY(1.1);transform-origin:0 15px">20</div>
<div class="t" style="left:54px;top:554px;line-height:20px;height:20px;font-size:13.6px;transform:scaleY(1.1);transform-origin:0 15px">1980 Jan  6  00:02:43.116</div>
<div class="t" style="left:225px;top:554px;line-height:20px;height:20px;font-size:12.8px;transform:scaleY(1.1);transform-origin:0 15px">0x1FE8</div>
<div class="t" style="left:330px;top:554px;line-height:20px;height:20px;font-size:13.9px;transform:scaleY(1.1);transform-origin:0 15px">QTrace Messages</div>
<div class="a" style="left:13px;top:575px;width:664px;height:21px;background:#fff"></div>
<div class="a" style="left:13px;top:575px;width:37px;height:21px;background:#b88573"></div>
<div class="a" style="left:51px;top:575px;width:170px;height:21px;background:#b88573"></div>
<div class="a" style="left:222px;top:575px;width:103px;height:21px;background:#b88573"></div>
<div class="a" style="left:326px;top:575px;width:324px;height:21px;background:#b88573"></div>
<div class="a" style="left:651px;top:575px;width:26px;height:21px;background:#b88573"></div>
<div class="a" style="left:13px;top:596px;width:664px;height:1px;background:#dcdcdc"></div>
<div class="t" style="left:16px;top:575px;line-height:21px;height:21px;font-size:13.2px;transform:scaleY(1.1);transform-origin:0 15px">21</div>
<div class="t" style="left:54px;top:575px;line-height:21px;height:21px;font-size:13.6px;transform:scaleY(1.1);transform-origin:0 15px">1980 Jan  6  00:02:43.116</div>
<div class="t" style="left:225px;top:575px;line-height:21px;height:21px;font-size:12.8px;transform:scaleY(1.1);transform-origin:0 15px">0x1FE8</div>
<div class="t" style="left:330px;top:575px;line-height:21px;height:21px;font-size:13.9px;transform:scaleY(1.1);transform-origin:0 15px">QTrace Messages</div>
<div class="a" style="left:13px;top:597px;width:664px;height:20px;background:#fff"></div>
<div class="a" style="left:13px;top:597px;width:37px;height:20px;background:#b88573"></div>
<div class="a" style="left:51px;top:597px;width:170px;height:20px;background:#b88573"></div>
<div class="a" style="left:222px;top:597px;width:103px;height:20px;background:#b88573"></div>
<div class="a" style="left:326px;top:597px;width:324px;height:20px;background:#b88573"></div>
<div class="a" style="left:651px;top:597px;width:26px;height:20px;background:#b88573"></div>
<div class="a" style="left:13px;top:617px;width:664px;height:1px;background:#dcdcdc"></div>
<div class="t" style="left:16px;top:597px;line-height:20px;height:20px;font-size:13.2px;transform:scaleY(1.1);transform-origin:0 15px">22</div>
<div class="t" style="left:54px;top:597px;line-height:20px;height:20px;font-size:13.6px;transform:scaleY(1.1);transform-origin:0 15px">1980 Jan  6  00:02:43.116</div>
<div class="t" style="left:225px;top:597px;line-height:20px;height:20px;font-size:12.8px;transform:scaleY(1.1);transform-origin:0 15px">0x1FE8</div>
<div class="t" style="left:330px;top:597px;line-height:20px;height:20px;font-size:13.9px;transform:scaleY(1.1);transform-origin:0 15px">QTrace Messages</div>
<div class="a" style="left:13px;top:618px;width:664px;height:20px;background:#fff"></div>
<div class="a" style="left:13px;top:618px;width:37px;height:20px;background:#b88573"></div>
<div class="a" style="left:51px;top:618px;width:170px;height:20px;background:#b88573"></div>
<div class="a" style="left:222px;top:618px;width:103px;height:20px;background:#b88573"></div>
<div class="a" style="left:326px;top:618px;width:324px;height:20px;background:#b88573"></div>
<div class="a" style="left:651px;top:618px;width:26px;height:20px;background:#b88573"></div>
<div class="a" style="left:13px;top:638px;width:664px;height:1px;background:#dcdcdc"></div>
<div class="t" style="left:16px;top:618px;line-height:20px;height:20px;font-size:13.2px;transform:scaleY(1.1);transform-origin:0 15px">23</div>
<div class="t" style="left:54px;top:618px;line-height:20px;height:20px;font-size:13.6px;transform:scaleY(1.1);transform-origin:0 15px">1980 Jan  6  00:02:43.116</div>
<div class="t" style="left:225px;top:618px;line-height:20px;height:20px;font-size:12.8px;transform:scaleY(1.1);transform-origin:0 15px">0x1FE8</div>
<div class="t" style="left:330px;top:618px;line-height:20px;height:20px;font-size:13.9px;transform:scaleY(1.1);transform-origin:0 15px">QTrace Messages</div>
<div class="a" style="left:13px;top:639px;width:664px;height:21px;background:#fff"></div>
<div class="a" style="left:13px;top:639px;width:37px;height:21px;background:#ffffff"></div>
<div class="a" style="left:51px;top:639px;width:170px;height:21px;background:#ffffff"></div>
<div class="a" style="left:222px;top:639px;width:103px;height:21px;background:#ffffff"></div>
<div class="a" style="left:326px;top:639px;width:324px;height:21px;background:#ffffff"></div>
<div class="a" style="left:651px;top:639px;width:26px;height:21px;background:#ffffff"></div>
<div class="a" style="left:13px;top:660px;width:664px;height:1px;background:#dcdcdc"></div>
<div class="t" style="left:16px;top:639px;line-height:21px;height:21px;font-size:13.2px;transform:scaleY(1.1);transform-origin:0 15px">24</div>
<div class="t" style="left:54px;top:639px;line-height:21px;height:21px;font-size:13.6px;transform:scaleY(1.1);transform-origin:0 15px">2020 Dec 28  12:03:33.737</div>
<div class="t" style="left:225px;top:639px;line-height:21px;height:21px;font-size:12.8px;transform:scaleY(1.1);transform-origin:0 15px">0xB179</div>
<div class="t" style="left:330px;top:639px;line-height:21px;height:21px;font-size:13.9px;transform:scaleY(1.1);transform-origin:0 15px">LTE ML1 Connected Mode LTE Intra-Freq Meas ...</div>
<div class="a" style="left:13px;top:661px;width:664px;height:20px;background:#fff"></div>
<div class="a" style="left:13px;top:661px;width:37px;height:20px;background:#b88573"></div>
<div class="a" style="left:51px;top:661px;width:170px;height:20px;background:#b88573"></div>
<div class="a" style="left:222px;top:661px;width:103px;height:20px;background:#b88573"></div>
<div class="a" style="left:326px;top:661px;width:324px;height:20px;background:#b88573"></div>
<div class="a" style="left:651px;top:661px;width:26px;height:20px;background:#b88573"></div>
<div class="a" style="left:13px;top:681px;width:664px;height:1px;background:#dcdcdc"></div>
<div class="t" style="left:16px;top:661px;line-height:20px;height:20px;font-size:13.2px;transform:scaleY(1.1);transform-origin:0 15px">25</div>
<div class="t" style="left:54px;top:661px;line-height:20px;height:20px;font-size:13.6px;transform:scaleY(1.1);transform-origin:0 15px">1980 Jan  6  00:02:43.116</div>
<div class="t" style="left:225px;top:661px;line-height:20px;height:20px;font-size:12.8px;transform:scaleY(1.1);transform-origin:0 15px">0x1FE8</div>
<div class="t" style="left:330px;top:661px;line-height:20px;height:20px;font-size:13.9px;transform:scaleY(1.1);transform-origin:0 15px">QTrace Messages</div>
<div class="a" style="left:13px;top:682px;width:664px;height:20px;background:#fff"></div>
<div class="a" style="left:13px;top:682px;width:37px;height:20px;background:#b88573"></div>
<div class="a" style="left:51px;top:682px;width:170px;height:20px;background:#b88573"></div>
<div class="a" style="left:222px;top:682px;width:103px;height:20px;background:#b88573"></div>
<div class="a" style="left:326px;top:682px;width:324px;height:20px;background:#b88573"></div>
<div class="a" style="left:651px;top:682px;width:26px;height:20px;background:#b88573"></div>
<div class="a" style="left:13px;top:702px;width:664px;height:1px;background:#dcdcdc"></div>
<div class="t" style="left:16px;top:682px;line-height:20px;height:20px;font-size:13.2px;transform:scaleY(1.1);transform-origin:0 15px">26</div>
<div class="t" style="left:54px;top:682px;line-height:20px;height:20px;font-size:13.6px;transform:scaleY(1.1);transform-origin:0 15px">1980 Jan  6  00:02:43.116</div>
<div class="t" style="left:225px;top:682px;line-height:20px;height:20px;font-size:12.8px;transform:scaleY(1.1);transform-origin:0 15px">0x1FE8</div>
<div class="t" style="left:330px;top:682px;line-height:20px;height:20px;font-size:13.9px;transform:scaleY(1.1);transform-origin:0 15px">QTrace Messages</div>
<div class="a" style="left:13px;top:703px;width:664px;height:21px;background:#fff"></div>
<div class="a" style="left:13px;top:703px;width:37px;height:21px;background:#b88573"></div>
<div class="a" style="left:51px;top:703px;width:170px;height:21px;background:#b88573"></div>
<div class="a" style="left:222px;top:703px;width:103px;height:21px;background:#b88573"></div>
<div class="a" style="left:326px;top:703px;width:324px;height:21px;background:#b88573"></div>
<div class="a" style="left:651px;top:703px;width:26px;height:21px;background:#b88573"></div>
<div class="a" style="left:13px;top:724px;width:664px;height:1px;background:#dcdcdc"></div>
<div class="t" style="left:16px;top:703px;line-height:21px;height:21px;font-size:13.2px;transform:scaleY(1.1);transform-origin:0 15px">27</div>
<div class="t" style="left:54px;top:703px;line-height:21px;height:21px;font-size:13.6px;transform:scaleY(1.1);transform-origin:0 15px">1980 Jan  6  00:02:43.116</div>
<div class="t" style="left:225px;top:703px;line-height:21px;height:21px;font-size:12.8px;transform:scaleY(1.1);transform-origin:0 15px">0x1FE8</div>
<div class="t" style="left:330px;top:703px;line-height:21px;height:21px;font-size:13.9px;transform:scaleY(1.1);transform-origin:0 15px">QTrace Messages</div>
<div class="a" style="left:13px;top:725px;width:664px;height:20px;background:#fff"></div>
<div class="a" style="left:13px;top:725px;width:37px;height:20px;background:#b88573"></div>
<div class="a" style="left:51px;top:725px;width:170px;height:20px;background:#b88573"></div>
<div class="a" style="left:222px;top:725px;width:103px;height:20px;background:#b88573"></div>
<div class="a" style="left:326px;top:725px;width:324px;height:20px;background:#b88573"></div>
<div class="a" style="left:651px;top:725px;width:26px;height:20px;background:#b88573"></div>
<div class="a" style="left:13px;top:745px;width:664px;height:1px;background:#dcdcdc"></div>
<div class="t" style="left:16px;top:725px;line-height:20px;height:20px;font-size:13.2px;transform:scaleY(1.1);transform-origin:0 15px">28</div>
<div class="t" style="left:54px;top:725px;line-height:20px;height:20px;font-size:13.6px;transform:scaleY(1.1);transform-origin:0 15px">1980 Jan  6  00:02:43.116</div>
<div class="t" style="left:225px;top:725px;line-height:20px;height:20px;font-size:12.8px;transform:scaleY(1.1);transform-origin:0 15px">0x1FE8</div>
<div class="t" style="left:330px;top:725px;line-height:20px;height:20px;font-size:13.9px;transform:scaleY(1.1);transform-origin:0 15px">QTrace Messages</div>
<div class="a" style="left:13px;top:746px;width:664px;height:20px;background:#fff"></div>
<div class="a" style="left:13px;top:746px;width:37px;height:20px;background:#b88573"></div>
<div class="a" style="left:51px;top:746px;width:170px;height:20px;background:#b88573"></div>
<div class="a" style="left:222px;top:746px;width:103px;height:20px;background:#b88573"></div>
<div class="a" style="left:326px;top:746px;width:324px;height:20px;background:#b88573"></div>
<div class="a" style="left:651px;top:746px;width:26px;height:20px;background:#b88573"></div>
<div class="a" style="left:13px;top:766px;width:664px;height:1px;background:#dcdcdc"></div>
<div class="t" style="left:16px;top:746px;line-height:20px;height:20px;font-size:13.2px;transform:scaleY(1.1);transform-origin:0 15px">29</div>
<div class="t" style="left:54px;top:746px;line-height:20px;height:20px;font-size:13.6px;transform:scaleY(1.1);transform-origin:0 15px">1980 Jan  6  00:02:43.117</div>
<div class="t" style="left:225px;top:746px;line-height:20px;height:20px;font-size:12.8px;transform:scaleY(1.1);transform-origin:0 15px">0x1FE8</div>
<div class="t" style="left:330px;top:746px;line-height:20px;height:20px;font-size:13.9px;transform:scaleY(1.1);transform-origin:0 15px">QTrace Messages</div>
<div class="a" style="left:13px;top:767px;width:664px;height:21px;background:#fff"></div>
<div class="a" style="left:13px;top:767px;width:37px;height:21px;background:#ffff00"></div>
<div class="a" style="left:51px;top:767px;width:170px;height:21px;background:#ffff00"></div>
<div class="a" style="left:222px;top:767px;width:103px;height:21px;background:#ffff00"></div>
<div class="a" style="left:326px;top:767px;width:324px;height:21px;background:#ffff00"></div>
<div class="a" style="left:651px;top:767px;width:26px;height:21px;background:#ffff00"></div>
<div class="a" style="left:13px;top:788px;width:664px;height:1px;background:#dcdcdc"></div>
<div class="t" style="left:16px;top:767px;line-height:21px;height:21px;font-size:13.2px;transform:scaleY(1.1);transform-origin:0 15px">30</div>
<div class="t" style="left:54px;top:767px;line-height:21px;height:21px;font-size:13.6px;transform:scaleY(1.1);transform-origin:0 15px">2020 Dec 28  12:03:33.738</div>
<div class="t" style="left:225px;top:767px;line-height:21px;height:21px;font-size:12.8px;transform:scaleY(1.1);transform-origin:0 15px">0x1FEB</div>
<div class="t" style="left:330px;top:767px;line-height:21px;height:21px;font-size:13.9px;transform:scaleY(1.1);transform-origin:0 15px">Extended Debug Message</div>
<div class="a" style="left:13px;top:789px;width:664px;height:20px;background:#fff"></div>
<div class="a" style="left:13px;top:789px;width:37px;height:20px;background:#ffff00"></div>
<div class="a" style="left:51px;top:789px;width:170px;height:20px;background:#ffff00"></div>
<div class="a" style="left:222px;top:789px;width:103px;height:20px;background:#ffff00"></div>
<div class="a" style="left:326px;top:789px;width:324px;height:20px;background:#ffff00"></div>
<div class="a" style="left:651px;top:789px;width:26px;height:20px;background:#ffff00"></div>
<div class="a" style="left:13px;top:809px;width:664px;height:1px;background:#dcdcdc"></div>
<div class="t" style="left:16px;top:789px;line-height:20px;height:20px;font-size:13.2px;transform:scaleY(1.1);transform-origin:0 15px">31</div>
<div class="t" style="left:54px;top:789px;line-height:20px;height:20px;font-size:13.6px;transform:scaleY(1.1);transform-origin:0 15px">2020 Dec 28  12:03:33.738</div>
<div class="t" style="left:225px;top:789px;line-height:20px;height:20px;font-size:12.8px;transform:scaleY(1.1);transform-origin:0 15px">0x1FEB</div>
<div class="t" style="left:330px;top:789px;line-height:20px;height:20px;font-size:13.9px;transform:scaleY(1.1);transform-origin:0 15px">Extended Debug Message</div>
<div class="a" style="left:13px;top:810px;width:664px;height:20px;background:#fff"></div>
<div class="a" style="left:13px;top:810px;width:37px;height:20px;background:#ffff00"></div>
<div class="a" style="left:51px;top:810px;width:170px;height:20px;background:#ffff00"></div>
<div class="a" style="left:222px;top:810px;width:103px;height:20px;background:#ffff00"></div>
<div class="a" style="left:326px;top:810px;width:324px;height:20px;background:#ffff00"></div>
<div class="a" style="left:651px;top:810px;width:26px;height:20px;background:#ffff00"></div>
<div class="a" style="left:13px;top:830px;width:664px;height:1px;background:#dcdcdc"></div>
<div class="t" style="left:16px;top:810px;line-height:20px;height:20px;font-size:13.2px;transform:scaleY(1.1);transform-origin:0 15px">32</div>
<div class="t" style="left:54px;top:810px;line-height:20px;height:20px;font-size:13.6px;transform:scaleY(1.1);transform-origin:0 15px">2020 Dec 28  12:03:33.738</div>
<div class="t" style="left:225px;top:810px;line-height:20px;height:20px;font-size:12.8px;transform:scaleY(1.1);transform-origin:0 15px">0x1FEB</div>
<div class="t" style="left:330px;top:810px;line-height:20px;height:20px;font-size:13.9px;transform:scaleY(1.1);transform-origin:0 15px">Extended Debug Message</div>
<div class="a" style="left:50px;top:127px;width:1px;height:684px;background:#dcdcdc"></div>
<div class="a" style="left:221px;top:127px;width:1px;height:684px;background:#dcdcdc"></div>
<div class="a" style="left:325px;top:127px;width:1px;height:684px;background:#dcdcdc"></div>
<div class="a" style="left:650px;top:127px;width:1px;height:684px;background:#dcdcdc"></div>
<div class="a" style="left:677px;top:101px;width:18px;height:710px;background:#f0f0f0"></div>
<svg class="a" style="left:681px;top:106px" width="10" height="8" viewBox="0 0 10 8"><path d="M1.2 6.3L5 2.5L8.8 6.3" fill="none" stroke="#606060" stroke-width="2"/></svg>
<div class="a" style="left:678px;top:119px;width:16px;height:19px;background:#cdcdcd"></div>
<div class="a" style="left:728px;top:75px;width:14px;height:14px;border:1px solid #333;background:#fff"></div>
<div class="t ms" style="left:747px;top:74px;font-size:13px;line-height:16px;"><span style="display:inline-block;width:6.3px;text-align:center"><span style="display:inline-block;transform:scaleX(0.72)">H</span></span><span style="display:inline-block;width:6.3px;text-align:center"><span style="display:inline-block;transform:scaleX(0.9)">e</span></span><span style="display:inline-block;width:6.3px;text-align:center"><span style="display:inline-block;transform:scaleX(0.9)">x</span></span><span style="display:inline-block;width:6.3px">&nbsp;</span><span style="display:inline-block;width:6.3px;text-align:center"><span style="display:inline-block;transform:scaleX(0.72)">D</span></span><span style="display:inline-block;width:6.3px;text-align:center"><span style="display:inline-block;transform:scaleX(0.9)">u</span></span><span style="display:inline-block;width:6.3px;text-align:center"><span style="display:inline-block;transform:scaleX(0.62)">m</span></span><span style="display:inline-block;width:6.3px;text-align:center"><span style="display:inline-block;transform:scaleX(0.9)">p</span></span></div>
<div class="a" style="left:784px;top:359px;width:510px;height:470px;background:#f0f0f0;border:1px solid #717171;box-shadow:0 5px 22px 3px rgba(0,0,0,0.22),1px 0 0 #a0a0a0"></div><div class="a" style="left:785px;top:360px;width:508px;height:32px;background:#fff"></div><svg class="a" style="left:793px;top:366px" width="18" height="18" viewBox="0 0 18 18"><defs><linearGradient id="ig" x1="0" y1="0" x2="0" y2="1"><stop offset="0" stop-color="#0d4877"/><stop offset="1" stop-color="#12899a"/></linearGradient></defs><rect x="0" y="0" width="17.5" height="17.5" rx="1" fill="url(#ig)"/><path d="M4 13 L8 4 L9.5 4 L13.5 13" fill="none" stroke="#cfe8ef" stroke-width="1.2"/><path d="M3 14.5 H14" stroke="#e8f4f7" stroke-width="1.2"/><path d="M5.5 9.5 H11.5" stroke="#9fd0de" stroke-width="1"/></svg><div class="t" style="left:816px;top:366px;font-size:13.8px;line-height:19px">Filter</div><svg class="a" style="left:1270px;top:368px" width="14" height="14" viewBox="0 0 14 14"><path d="M1 1 L12.5 12.5 M12.5 1 L1 12.5" stroke="#000" stroke-width="1.2"/></svg><div class="a" style="left:797px;top:424px;width:482px;height:361px;background:#fff;border:1px solid #dadada"></div><div class="a" style="left:843px;top:406px;width:56px;height:19px;background:#f0f0f0;border:1px solid #dadada;border-bottom:none"></div><div class="a" style="left:898px;top:406px;width:56px;height:19px;background:#f0f0f0;border:1px solid #dadada;border-bottom:none"></div><div class="a" style="left:797px;top:403px;width:47px;height:23px;background:#fff;border:1px solid #dadada;border-bottom:none"></div><div class="t ms" style="left:809px;top:406px;font-size:13px;line-height:16px;"><span style="display:inline-block;width:6.3px;text-align:center"><span style="display:inline-block;transform:scaleX(0.72)">A</span></span><span style="display:inline-block;width:6.3px;text-align:center"><span style="display:inline-block;transform:scaleX(0.9)">l</span></span><span style="display:inline-block;width:6.3px;text-align:center"><span style="display:inline-block;transform:scaleX(0.9)">l</span></span></div><div class="t ms" style="left:853px;top:408px;font-size:13px;line-height:16px;"><span style="display:inline-block;width:6.3px;text-align:center"><span style="display:inline-block;transform:scaleX(0.72)">S</span></span><span style="display:inline-block;width:6.3px;text-align:center"><span style="display:inline-block;transform:scaleX(1.15)">I</span></span><span style="display:inline-block;width:6.3px;text-align:center"><span style="display:inline-block;transform:scaleX(0.72)">D</span></span><span style="display:inline-block;width:6.3px">&nbsp;</span><span style="display:inline-block;width:6.3px;text-align:center"><span style="display:inline-block;transform:scaleX(0.9)">1</span></span></div><div class="t ms" style="left:910px;top:408px;font-size:13px;line-height:16px;"><span style="display:inline-block;width:6.3px;text-align:center"><span style="display:inline-block;transform:scaleX(0.72)">S</span></span><span style="display:inline-block;width:6.3px;text-align:center"><span style="display:inline-block;transform:scaleX(1.15)">I</span></span><span style="display:inline-block;width:6.3px;text-align:center"><span style="display:inline-block;transform:scaleX(0.72)">D</span></span><span style="display:inline-block;width:6.3px">&nbsp;</span><span style="display:inline-block;width:6.3px;text-align:center"><span style="display:inline-block;transform:scaleX(0.9)">2</span></span></div><div class="t ms" style="left:809px;top:440px;font-size:13px;line-height:16px;"><span style="display:inline-block;width:6.3px;text-align:center"><span style="display:inline-block;transform:scaleX(0.72)">L</span></span><span style="display:inline-block;width:6.3px;text-align:center"><span style="display:inline-block;transform:scaleX(0.9)">o</span></span><span style="display:inline-block;width:6.3px;text-align:center"><span style="display:inline-block;transform:scaleX(0.9)">g</span></span><span style="display:inline-block;width:6.3px">&nbsp;</span><span style="display:inline-block;width:6.3px;text-align:center"><span style="display:inline-block;transform:scaleX(1.15)">I</span></span><span style="display:inline-block;width:6.3px;text-align:center"><span style="display:inline-block;transform:scaleX(0.72)">D</span></span></div><div class="a" style="left:855px;top:438px;width:410px;height:21px;background:#fff;border:1px solid #7a7a7a"></div><div class="t ms" style="left:858px;top:440px;font-size:13px;line-height:16px;"><span style="display:inline-block;width:6.3px;text-align:center"><span style="display:inline-block;transform:scaleX(0.72)">O</span></span><span style="display:inline-block;width:6.3px;text-align:center"><span style="display:inline-block;transform:scaleX(0.72)">X</span></span><span style="display:inline-block;width:6.3px;text-align:center"><span style="display:inline-block;transform:scaleX(0.9)">1</span></span><span style="display:inline-block;width:6.3px;text-align:center"><span style="display:inline-block;transform:scaleX(0.9)">1</span></span><span style="display:inline-block;width:6.3px;text-align:center"><span style="display:inline-block;transform:scaleX(0.72)">E</span></span><span style="display:inline-block;width:6.3px;text-align:center"><span style="display:inline-block;transform:scaleX(0.72)">B</span></span></div><div class="a" style="left:811px;top:466px;width:454px;height:304px;background:#fff;border:1px solid #828790"></div><div class="a" style="left:857px;top:470.00px;width:14px;height:14px;border:1px solid #333;background:#fff"></div><div class="t" style="left:878px;top:466.50px;line-height:20px;font-size:13.5px">[0x11C6]</div><div class="t" style="left:944px;top:466.50px;line-height:20px;font-size:13.5px">Reserved</div><div class="a" style="left:857px;top:490.27px;width:14px;height:14px;border:1px solid #333;background:#fff"></div><div class="t" style="left:878px;top:486.77px;line-height:20px;font-size:13.5px">[0x11C7]</div><div class="t" style="left:944px;top:486.77px;line-height:20px;font-size:13.5px">QTV RTP Entire Decrypted Packet</div><div class="a" style="left:857px;top:510.54px;width:14px;height:14px;border:1px solid #333;background:#fff"></div><div class="t" style="left:878px;top:507.04px;line-height:20px;font-size:13.5px">[0x11C8]</div><div class="t" style="left:944px;top:507.04px;line-height:20px;font-size:13.5px">Reserved</div><div class="a" style="left:857px;top:530.81px;width:14px;height:14px;border:1px solid #333;background:#fff"></div><div class="t" style="left:878px;top:527.31px;line-height:20px;font-size:13.5px">[0x11E1]</div><div class="t" style="left:944px;top:527.31px;line-height:20px;font-size:13.5px">GPS PDSM Position Report Callback</div><div class="a" style="left:857px;top:551.08px;width:14px;height:14px;border:1px solid #333;background:#fff"></div><div class="t" style="left:878px;top:547.58px;line-height:20px;font-size:13.5px">[0x11E2]</div><div class="t" style="left:944px;top:547.58px;line-height:20px;font-size:13.5px">GPS PDSM PD Event Callback</div><div class="a" style="left:857px;top:571.35px;width:14px;height:14px;border:1px solid #333;background:#fff"></div><div class="t" style="left:878px;top:567.85px;line-height:20px;font-size:13.5px">[0x11E3]</div><div class="t" style="left:944px;top:567.85px;line-height:20px;font-size:13.5px">GPS PDSM PA Event Callback</div><div class="a" style="left:857px;top:591.62px;width:14px;height:14px;border:1px solid #333;background:#fff"></div><div class="t" style="left:878px;top:588.12px;line-height:20px;font-size:13.5px">[0x11E4]</div><div class="t" style="left:944px;top:588.12px;line-height:20px;font-size:13.5px">GPS PDSM Notify Verify Request</div><div class="a" style="left:857px;top:611.89px;width:14px;height:14px;border:1px solid #333;background:#fff"></div><div class="t" style="left:878px;top:608.39px;line-height:20px;font-size:13.5px">[0x11E5]</div><div class="t" style="left:944px;top:608.39px;line-height:20px;font-size:13.5px">Reserved</div><div class="a" style="left:857px;top:632.16px;width:14px;height:14px;border:1px solid #333;background:#fff"></div><div class="t" style="left:878px;top:628.66px;line-height:20px;font-size:13.5px">[0x11E6]</div><div class="t" style="left:944px;top:628.66px;line-height:20px;font-size:13.5px">GPS PDSM Reserved 2</div><div class="a" style="left:857px;top:652.43px;width:14px;height:14px;border:1px solid #333;background:#fff"></div><div class="t" style="left:878px;top:648.93px;line-height:20px;font-size:13.5px">[0x11E7]</div><div class="t" style="left:944px;top:648.93px;line-height:20px;font-size:13.5px">Srch Reserved</div><div class="a" style="left:857px;top:672.70px;width:14px;height:14px;border:1px solid #333;background:#fff"></div><div class="t" style="left:878px;top:669.20px;line-height:20px;font-size:13.5px">[0x11E8]</div><div class="t" style="left:944px;top:669.20px;line-height:20px;font-size:13.5px">Srch Reserved</div><div class="a" style="left:857px;top:692.97px;width:14px;height:14px;border:1px solid #333;background:#fff"></div><div class="t" style="left:878px;top:689.47px;line-height:20px;font-size:13.5px">[0x11E9]</div><div class="t" style="left:944px;top:689.47px;line-height:20px;font-size:13.5px">GPS MS MPC Forward Link</div><div class="a" style="left:857px;top:713.24px;width:14px;height:14px;border:1px solid #333;background:#fff"></div><div class="t" style="left:878px;top:709.74px;line-height:20px;font-size:13.5px">[0x11EA]</div><div class="t" style="left:944px;top:709.74px;line-height:20px;font-size:13.5px">GPS MS MPC Reverse Link</div><div class="a" style="left:854px;top:730.01px;width:392px;height:20px;background:#cce8ff"></div><div class="a" style="left:857px;top:733.51px;width:14px;height:14px;border:1px solid #333;background:#fff"></div><svg class="a" style="left:857px;top:733.51px" width="14" height="14" viewBox="0 0 14 14"><path d="M2.5 6.5 L5.5 9.8 L11.8 3" fill="none" stroke="#555" stroke-width="1.3"/></svg><div class="t" style="left:878px;top:730.01px;line-height:20px;font-size:13.5px">[0x11EB]</div><div class="t" style="left:944px;top:730.01px;line-height:20px;font-size:13.5px">Data Protocol Logging</div><div class="a" style="left:857px;top:753.78px;width:14px;height:14px;border:1px solid #333;background:#fff"></div><div class="t" style="left:878px;top:750.28px;line-height:20px;font-size:13.5px">[0x11EC]</div><div class="t" style="left:944px;top:750.28px;line-height:20px;font-size:13.5px">Reserved</div><div class="a" style="left:1247px;top:467px;width:17px;height:302px;background:#f0f0f0"></div><svg class="a" style="left:1250px;top:471px" width="10" height="8" viewBox="0 0 10 8"><path d="M1.2 6.3L5 2.5L8.8 6.3" fill="none" stroke="#606060" stroke-width="2"/></svg><svg class="a" style="left:1250px;top:756px" width="10" height="8" viewBox="0 0 10 8"><path d="M1.2 1.7L5 5.5L8.8 1.7" fill="none" stroke="#606060" stroke-width="2"/></svg><div class="a" style="left:1247px;top:505px;width:16px;height:19px;background:#cdcdcd"></div><div class="a" style="left:943px;top:794px;width:77px;height:24px;background:#e1e1e1;border:2px solid #0078d7"></div><div class="t ms" style="left:959.5px;top:799px;font-size:13px;line-height:16px;"><span style="display:inline-block;width:6.3px;text-align:center"><span style="display:inline-block;transform:scaleX(0.72)">O</span></span><span style="display:inline-block;width:6.3px;text-align:center"><span style="display:inline-block;transform:scaleX(0.9)">p</span></span><span style="display:inline-block;width:6.3px;text-align:center"><span style="display:inline-block;transform:scaleX(0.9)">e</span></span><span style="display:inline-block;width:6.3px;text-align:center"><span style="display:inline-block;transform:scaleX(0.9)">n</span></span><span style="display:inline-block;width:6.3px;text-align:center"><span style="display:inline-block;transform:scaleX(0.9)">.</span></span><span style="display:inline-block;width:6.3px;text-align:center"><span style="display:inline-block;transform:scaleX(0.9)">.</span></span><span style="display:inline-block;width:6.3px;text-align:center"><span style="display:inline-block;transform:scaleX(0.9)">.</span></span></div><div class="a" style="left:1029px;top:794px;width:78px;height:24px;background:#e1e1e1;border:1px solid #adadad"></div><div class="t ms" style="left:1046.0px;top:799px;font-size:13px;line-height:16px;"><span style="display:inline-block;width:6.3px;text-align:center"><span style="display:inline-block;transform:scaleX(0.72)">S</span></span><span style="display:inline-block;width:6.3px;text-align:center"><span style="display:inline-block;transform:scaleX(0.9)">a</span></span><span style="display:inline-block;width:6.3px;text-align:center"><span style="display:inline-block;transform:scaleX(0.9)">v</span></span><span style="display:inline-block;width:6.3px;text-align:center"><span style="display:inline-block;transform:scaleX(0.9)">e</span></span><span style="display:inline-block;width:6.3px;text-align:center"><span style="display:inline-block;transform:scaleX(0.9)">.</span></span><span style="display:inline-block;width:6.3px;text-align:center"><span style="display:inline-block;transform:scaleX(0.9)">.</span></span><span style="display:inline-block;width:6.3px;text-align:center"><span style="display:inline-block;transform:scaleX(0.9)">.</span></span></div><div class="a" style="left:1116px;top:794px;width:77px;height:24px;background:#e1e1e1;border:1px solid #adadad"></div><div class="t ms" style="left:1148.2px;top:799px;font-size:13px;line-height:16px;"><span style="display:inline-block;width:6.3px;text-align:center"><span style="display:inline-block;transform:scaleX(0.72)">O</span></span><span style="display:inline-block;width:6.3px;text-align:center"><span style="display:inline-block;transform:scaleX(0.72)">K</span></span></div><div class="a" style="left:1202px;top:794px;width:76px;height:24px;background:#e1e1e1;border:1px solid #adadad"></div><div class="t ms" style="left:1221.1px;top:799px;font-size:13px;line-height:16px;"><span style="display:inline-block;width:6.3px;text-align:center"><span style="display:inline-block;transform:scaleX(0.72)">C</span></span><span style="display:inline-block;width:6.3px;text-align:center"><span style="display:inline-block;transform:scaleX(0.9)">a</span></span><span style="display:inline-block;width:6.3px;text-align:center"><span style="display:inline-block;transform:scaleX(0.9)">n</span></span><span style="display:inline-block;width:6.3px;text-align:center"><span style="display:inline-block;transform:scaleX(0.9)">c</span></span><span style="display:inline-block;width:6.3px;text-align:center"><span style="display:inline-block;transform:scaleX(0.9)">e</span></span><span style="display:inline-block;width:6.3px;text-align:center"><span style="display:inline-block;transform:scaleX(0.9)">l</span></span></div><div class="t" style="left:1112px;top:777px;font-size:18.5px;line-height:26px;letter-spacing:-0.6px;color:#a4a4a4;-webkit-text-stroke:2.5px rgba(255,255,255,0.6);paint-order:stroke fill">CSDN @</div><svg class="a" style="left:1186.5px;top:782.5px;overflow:visible" width="18" height="18" viewBox="0 0 16 16"><path d="M0.55 16.3V1.35H13.7V16.3M0.55 14.1H13.7M5 1.35Q5 9 0.7 11.7M8.2 1.35V10.5H11.6" fill="none" stroke="rgba(255,255,255,0.6)" stroke-width="2.2" stroke-linecap="round"/><path d="M0.55 16.3V1.35H13.7V16.3M0.55 14.1H13.7M5 1.35Q5 9 0.7 11.7M8.2 1.35V10.5H11.6" fill="none" stroke="#8e8e8e" stroke-width="0.95"/></svg><svg class="a" style="left:1205.0px;top:782.5px;overflow:visible" width="18" height="18" viewBox="0 0 16 16"><path d="M6 0.3V8Q6 13.5 0.4 16M10.2 0.3V14Q10.2 14.8 11 14.8H15.7V11.7" fill="none" stroke="rgba(255,255,255,0.6)" stroke-width="2.2" stroke-linecap="round"/><path d="M6 0.3V8Q6 13.5 0.4 16M10.2 0.3V14Q10.2 14.8 11 14.8H15.7V11.7" fill="none" stroke="#8e8e8e" stroke-width="0.95"/></svg><svg class="a" style="left:1225.0px;top:782.5px;overflow:visible" width="18" height="18" viewBox="0 0 16 16"><path d="M0.1 4.6V1.95H15V4.6M6.9 -0.2V1.6M2 6.2H13.4M7.7 6.2Q5 9.5 1 11M7.5 8.5Q5 12 1 13.5M8.5 9Q5.5 14 1.5 16M8.5 8V15.5L7 14.5M10 9.5L15 14.5M12.5 8L10.5 10" fill="none" stroke="rgba(255,255,255,0.6)" stroke-width="2.2" stroke-linecap="round"/><path d="M0.1 4.6V1.95H15V4.6M6.9 -0.2V1.6M2 6.2H13.4M7.7 6.2Q5 9.5 1 11M7.5 8.5Q5 12 1 13.5M8.5 9Q5.5 14 1.5 16M8.5 8V15.5L7 14.5M10 9.5L15 14.5M12.5 8L10.5 10" fill="none" stroke="#8e8e8e" stroke-width="0.95"/></svg><svg class="a" style="left:1247.0px;top:782.5px;overflow:visible" width="18" height="18" viewBox="0 0 16 16"><path d="M3.5 0L2.5 2.8M1 3V15.5M1 3H6.5V15.5M1 9H6.5M1 15H6.5M9.8 0L8.2 5M8.8 4H15.5V14.5Q15.5 16 13.5 15.5M10.3 8L12 11" fill="none" stroke="rgba(255,255,255,0.6)" stroke-width="2.2" stroke-linecap="round"/><path d="M3.5 0L2.5 2.8M1 3V15.5M1 3H6.5V15.5M1 9H6.5M1 15H6.5M9.8 0L8.2 5M8.8 4H15.5V14.5Q15.5 16 13.5 15.5M10.3 8L12 11" fill="none" stroke="#8e8e8e" stroke-width="0.95"/></svg><svg class="a" style="left:1268.0px;top:782.5px;overflow:visible" width="18" height="18" viewBox="0 0 16 16"><path d="M7.8 0V14.5Q7.8 16 6 15.3M4.5 5.5L1 12.5M11 5.5L15 11" fill="none" stroke="rgba(255,255,255,0.6)" stroke-width="2.2" stroke-linecap="round"/><path d="M7.8 0V14.5Q7.8 16 6 15.3M4.5 5.5L1 12.5M11 5.5L15 11" fill="none" stroke="#8e8e8e" stroke-width="0.95"/></svg><svg class="a" style="left:1290.0px;top:782.5px;overflow:visible" width="18" height="18" viewBox="0 0 16 16"><path d="M3 0L4 2M0.5 4H5.5L0.5 10.5M3.5 7.5V16M4 9L6 10.5M7.8 1.5V15.5M7.8 1.5H13.5V15.5M7.8 6H13.5M7.8 10.5H13.5M6 15.5H15.5" fill="none" stroke="rgba(255,255,255,0.6)" stroke-width="2.2" stroke-linecap="round"/><path d="M3 0L4 2M0.5 4H5.5L0.5 10.5M3.5 7.5V16M4 9L6 10.5M7.8 1.5V15.5M7.8 1.5H13.5V15.5M7.8 6H13.5M7.8 10.5H13.5M6 15.5H15.5" fill="none" stroke="#8e8e8e" stroke-width="0.95"/></svg><svg class="a" style="left:1312.0px;top:782.5px;overflow:visible" width="18" height="18" viewBox="0 0 16 16"><path d="M8 0V1.8M1 4.5V2H15V4.5M4 6.5H12M1 9.5H15M8 9.5V15Q8 16 6.5 15.5M4.5 11.5L1.5 15M11.5 11.5L14.5 15" fill="none" stroke="rgba(255,255,255,0.6)" stroke-width="2.2" stroke-linecap="round"/><path d="M8 0V1.8M1 4.5V2H15V4.5M4 6.5H12M1 9.5H15M8 9.5V15Q8 16 6.5 15.5M4.5 11.5L1.5 15M11.5 11.5L14.5 15" fill="none" stroke="#8e8e8e" stroke-width="0.95"/></svg>
</body></html>
